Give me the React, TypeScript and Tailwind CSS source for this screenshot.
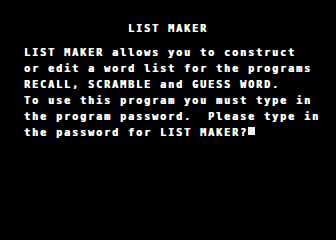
import React from "react";

const lines = [
  "LIST MAKER allows you to construct",
  "or edit a word list for the programs",
  "RECALL, SCRAMBLE and GUESS WORD.",
  "To use this program you must type in",
  "the program password.  Please type in",
];

export default function App() {
  return (
    <div
      className="w-[336px] h-[240px] bg-black text-white overflow-hidden pt-[25px] pl-[24px] [text-shadow:0.6px_0_0_#ffffff]"
      style={{ fontFamily: '"DejaVu Sans Mono", monospace' }}
    >
      <div className="h-[24px] text-[10px] leading-[8px] font-bold tracking-[1.98px] whitespace-pre ml-[104px]">
        LIST MAKER
      </div>
      {lines.map((l, i) => (
        <div
          key={i}
          className="h-[16px] text-[10px] leading-[8px] font-bold tracking-[1.98px] whitespace-pre"
        >
          {l}
        </div>
      ))}
      <div className="h-[16px] text-[10px] leading-[8px] font-bold tracking-[1.98px] whitespace-pre">
        the password for LIST MAKER?
        <span className="inline-block align-top relative -top-[2px] w-[7px] h-[8px] bg-[#eeeeee]" />
      </div>
    </div>
  );
}
